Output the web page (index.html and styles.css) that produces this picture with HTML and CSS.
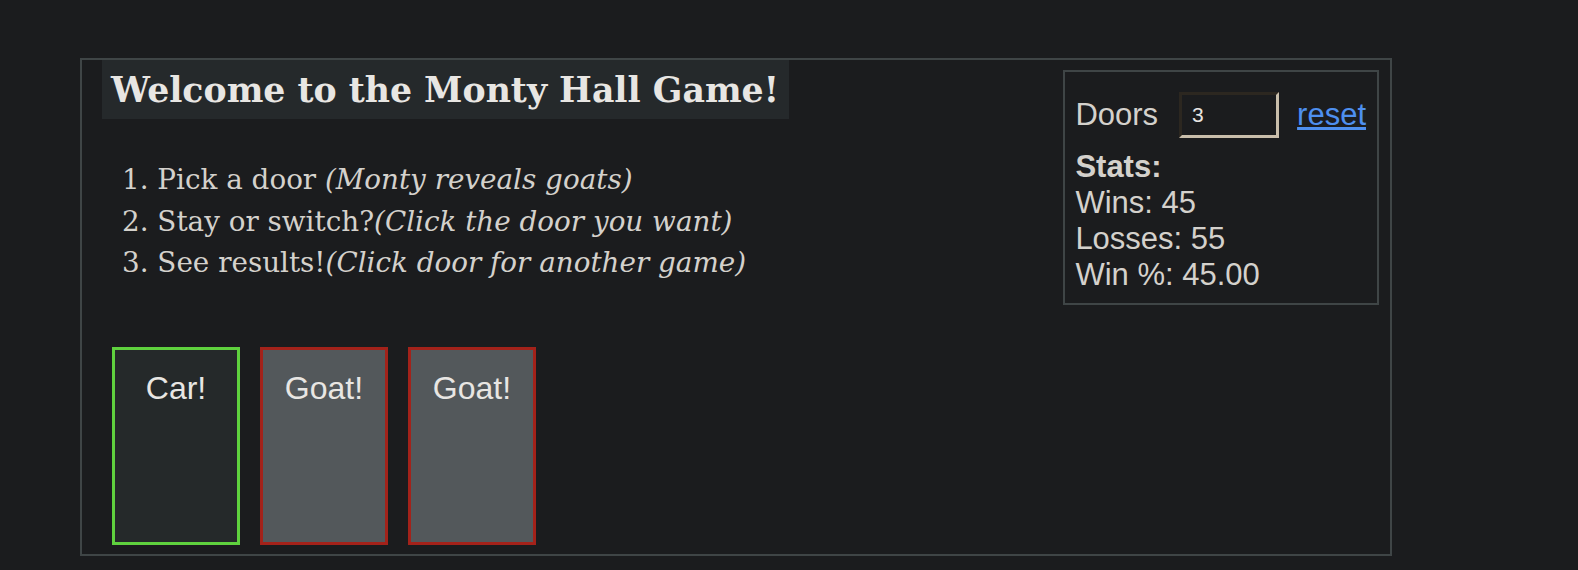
FILE: index.html
```html
<!DOCTYPE html>
<html lang="en">
<head>
<meta charset="utf-8">
<title>Monty Hall Game</title>
<link rel="stylesheet" href="styles.css">
</head>
<body>
<div class="game">
  <div class="main">
    <h1 class="title">Welcome to the Monty Hall Game!</h1>
    <ol class="steps">
      <li>Pick a door <em>(Monty reveals goats)</em></li>
      <li>Stay or switch?<em>(Click the door you want)</em></li>
      <li>See results!<em>(Click door for another game)</em></li>
    </ol>
    <div class="doors">
      <div class="door door-win">Car!</div>
      <div class="door door-lose">Goat!</div>
      <div class="door door-lose">Goat!</div>
    </div>
  </div>
  <aside class="stats">
    <div class="doors-row">
      <span class="doors-label">Doors</span>
      <input class="doors-input" type="text" value="3">
      <a href="#" class="reset">reset</a>
    </div>
    <div class="stats-title">Stats:</div>
    <div class="stat-line">Wins: 45</div>
    <div class="stat-line">Losses: 55</div>
    <div class="stat-line">Win %: 45.00</div>
  </aside>
</div>
</body>
</html>
```

FILE: styles.css
```css
html, body {
  margin: 0;
  padding: 0;
  background: #1b1c1e;
  color: #e8e6e3;
}

body {
  font-family: "Liberation Sans", Arial, sans-serif;
}

.game {
  box-sizing: border-box;
  margin: 58px 0 0 80px;
  width: 1312px;
  height: 498px;
  border: 2px solid #3f4546;
  display: flex;
  justify-content: space-between;
  align-items: flex-start;
}

.main {
  padding-left: 20px;
  display: flex;
  flex-direction: column;
  align-items: flex-start;
}

.title {
  margin: 0;
  background: #25292b;
  padding: 9px 10px 9px 9px;
  font-family: "DejaVu Serif", Georgia, serif;
  font-weight: bold;
  font-size: 34.7px;
  line-height: 41px;
  color: #e8e6e3;
  white-space: nowrap;
}

.steps {
  margin: 40px 0 0 0;
  padding-left: 20px;
  list-style-position: inside;
  font-family: "DejaVu Serif", Georgia, serif;
  font-size: 27.8px;
  line-height: 41.7px;
  color: #d4d1cc;
  white-space: nowrap;
}

.steps em {
  font-style: italic;
}

.doors {
  margin: 63px 0 0 10px;
  display: flex;
  gap: 20px;
}

.door {
  box-sizing: border-box;
  width: 128px;
  height: 198px;
  border: 3px solid;
  padding-top: 20px;
  text-align: center;
  font-family: "Liberation Sans", Arial, sans-serif;
  font-size: 32px;
  color: #e8e6e3;
}

.door-win {
  border-color: #5fd13e;
  background: #25292a;
}

.door-lose {
  border-color: #a3221a;
  background: #53585b;
}

.stats {
  margin: 10px 11px 0 0;
  border: 2px solid #3f4546;
  padding: 10px 11px 10px 10px;
  font-size: 31px;
  line-height: 36px;
  color: #d4d1cc;
}

.doors-row {
  height: 66px;
  margin-bottom: 1px;
  display: flex;
  align-items: center;
}

.doors-input {
  box-sizing: border-box;
  width: 100px;
  height: 46px;
  margin: 0 18px 0 21px;
  padding: 0 0 0 10px;
  background: #1b1c1e;
  color: #e8e6e3;
  font-family: "Liberation Sans", Arial, sans-serif;
  font-size: 21px;
  border-style: solid;
  border-width: 3px;
  border-color: #2c2720 #c9beab #c9beab #2c2720;
  outline: none;
}

.reset {
  color: #4e8fef;
  text-decoration: underline;
}

.stats-title {
  font-weight: bold;
}
```
